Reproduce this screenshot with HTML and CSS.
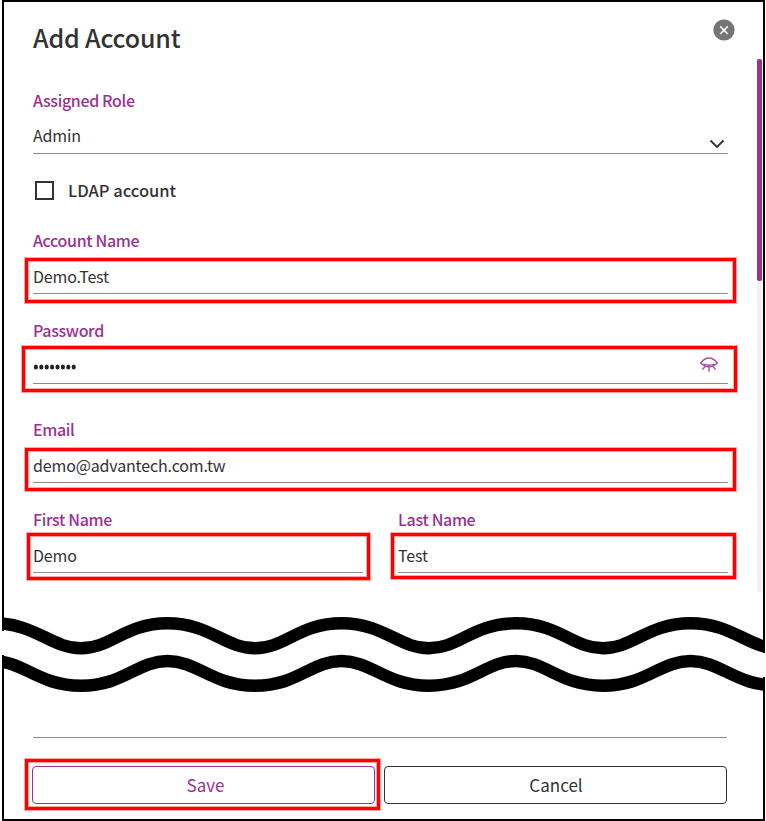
FILE: index.html
```html
<!DOCTYPE html>
<html lang="en">
    <head>
        <title>Add Account</title>
        <meta charset="UTF-8">
        <meta name="viewport" content="width=device-width, initial-scale=1.0">
        <link rel="stylesheet" href="styles.css">
    </head>
    <body>
        <div class="dialog">
            <div class="header">
                <h1 class="title">Add Account</h1>
                <svg class="close" width="22" height="22" viewBox="0 0 22 22">
                    <circle cx="11" cy="11" r="10.6" fill="#757575"/>
                    <path d="M7.2 7.4 L14.8 15 M14.8 7.4 L7.2 15" stroke="#fff" stroke-width="1.6"/>
                </svg>
            </div>
            <div class="content">
                <div class="form">
                    <div class="field select">
                        <div class="label">Assigned Role</div>
                        <div class="value">
                            <span class="role">Admin</span>
                            <svg class="chevron" width="16" height="10" viewBox="0 0 16 10">
                                <path d="M1.5 1.5 L8 8 L14.5 1.5" fill="none" stroke="#333" stroke-width="1.8"/>
                            </svg>
                        </div>
                    </div>
                    <div class="check-row">
                        <span class="checkbox"></span>
                        <span class="check-label">LDAP account</span>
                    </div>
                    <div class="field">
                        <div class="label">Account Name</div>
                        <div class="value"><span class="account">Demo.Test</span></div>
                        <div class="highlight mark-account"></div>
                    </div>
                    <div class="field password">
                        <div class="label">Password</div>
                        <div class="value">
                            <svg class="dots" width="44" height="6" viewBox="0 0 44 6" fill="#222">
                                <ellipse cx="2.9" cy="3" rx="2.1" ry="2.5"/>
                                <ellipse cx="8.3" cy="3" rx="2.1" ry="2.5"/>
                                <ellipse cx="13.7" cy="3" rx="2.1" ry="2.5"/>
                                <ellipse cx="19.1" cy="3" rx="2.1" ry="2.5"/>
                                <ellipse cx="24.5" cy="3" rx="2.1" ry="2.5"/>
                                <ellipse cx="29.9" cy="3" rx="2.1" ry="2.5"/>
                                <ellipse cx="35.3" cy="3" rx="2.1" ry="2.5"/>
                                <ellipse cx="40.7" cy="3" rx="2.1" ry="2.5"/>
                            </svg>
                            <svg class="eye" width="20" height="16" viewBox="0 0 20 16" fill="none" stroke="#a94fa5" stroke-width="1.4">
                                <path d="M1.6 7 Q5.6 2 10 2 T18.4 7 Q14.4 10.8 10 10.8 T1.6 7 Z"/>
                                <path d="M4.4 8.2 Q10 10.2 15.6 8.2"/>
                                <path d="M6.6 9.8 L3.4 13.6 M10 10 V15.8 M13.4 9.8 L16.6 13.6"/>
                            </svg>
                        </div>
                        <div class="highlight mark-password"></div>
                    </div>
                    <div class="field email">
                        <div class="label">Email</div>
                        <div class="value"><span class="address">demo@advantech.com.tw</span></div>
                        <div class="highlight mark-email"></div>
                    </div>
                    <div class="names">
                        <div class="field">
                            <div class="label">First Name</div>
                            <div class="value"><span>Demo</span></div>
                            <div class="highlight mark-first"></div>
                        </div>
                        <div class="field">
                            <div class="label">Last Name</div>
                            <div class="value"><span>Test</span></div>
                            <div class="highlight mark-last"></div>
                        </div>
                    </div>
                </div>
                <div class="scrollbar"><div class="thumb"></div></div>
            </div>

            <!-- page break, the frame is open between the two waves -->
            <svg class="wave" width="763" height="108" viewBox="2 592 763 108">
                <path d="M3 592 V631 M3 655 V700 M764 592 V653 M764 677 V700" stroke="#000" stroke-width="2"/>
                <clipPath id="cut-top"><rect x="4" y="592" width="759" height="108"/></clipPath>
                <clipPath id="cut-bottom"><rect x="2" y="592" width="761" height="108"/></clipPath>
                <g fill="none" stroke="#000" stroke-width="12.4">
                    <path clip-path="url(#cut-top)" d="M-6.5 623.3 C36 623.3 51 648.3 81 648.3 S125 623.3 167.5 623.3
                        S225 648.3 255 648.3 S299 623.3 341.5 623.3 S399 648.3 429 648.3 S473 623.3 516 623.3
                        S573 648.3 603 648.3 S648 623.3 690.5 623.3 S748 648.3 778 648.3"/>
                    <path clip-path="url(#cut-bottom)" d="M-6.5 661 C24 661 38 685.7 81 685.7 S137 661 167.5 661
                        S212 685.7 255 685.7 S311 661 341.5 661 S386 685.7 429 685.7 S486 661 516 661
                        S560 685.7 603 685.7 S660 661 690.5 661 S735 685.7 778 685.7"/>
                </g>
            </svg>

            <div class="footer">
                <div class="actions">
                    <div class="button save">Save<div class="highlight mark-save"></div></div>
                    <div class="button cancel">Cancel</div>
                </div>
            </div>
        </div>
    </body>
</html>
```
FILE: styles.css
```css
* {
    box-sizing: border-box;
}
body {
    margin: 0;
    background: #fff;
    color: #333;
    font-family: "Noto Sans CJK TC", "Noto Sans", sans-serif;
    font-size: 16px;
}
svg {
    display: block;
}
.dialog {
    display: flex;
    flex-direction: column;
    width: 763px;
    height: 821px;
    margin-left: 2px;
    border: 2px solid #000;
}
.header {
    display: flex;
    justify-content: space-between;
    height: 57px;
    padding: 17px 28px 0 29px;
}
.title {
    margin: 1px 0 0;
    font-size: 25px;
    font-weight: 500;
    letter-spacing: -0.15px;
    line-height: 34px;
}
.content {
    display: flex;
    height: 533px;
}
.form {
    flex: 1;
    padding: 31px 29px 0;
}
.scrollbar {
    width: 5px;
    margin-right: 1px;
    background: #f1f1f1;
}
.thumb {
    height: 222px;
    border-radius: 2px;
    background: #9b3192;
}
.field {
    position: relative;
    height: 64px;
    border-bottom: 1px solid #8c8c8c;
}
.label {
    color: #9b3192;
    font-weight: 500;
    letter-spacing: -0.35px;
    line-height: 20px;
}
.value {
    display: flex;
    align-items: center;
    justify-content: space-between;
    height: 32px;
    margin-top: 10px;
    letter-spacing: -0.15px;
}
.select .value {
    height: 30px;
}
.chevron {
    margin: 17px 3px 0 0;
}
.check-row {
    display: flex;
    align-items: center;
    gap: 14px;
    height: 20px;
    margin: 26px 0 30px 2px;
}
.checkbox {
    width: 19px;
    height: 19px;
    border: 2px solid #333;
}
.check-label {
    font-size: 16.5px;
    font-weight: 500;
    line-height: 20px;
}
.password {
    margin-top: 26px;
}
.dots {
    margin-top: 2px;
}
.eye {
    margin: -5px 9px 0 0;
}
.email {
    margin-top: 35px;
}
.names {
    display: grid;
    grid-template-columns: 330px 330px;
    gap: 35px;
    margin-top: 26px;
}
/* red frames drawn over the fields */
.highlight {
    position: absolute;
    border: 3px solid #f00;
    box-shadow: 0 0 0 1px rgba(255, 0, 0, 0.35), inset 0 0 0 1px rgba(255, 0, 0, 0.35);
}
.mark-account {
    inset: 28px -8px -10px;
}
.mark-password {
    inset: 26px -9px -9px -11px;
}
.mark-email {
    inset: 29px -8px -9px;
}
.mark-first {
    inset: 24px -7px -8px -6px;
}
.mark-last {
    inset: 24px -8px -7px -7px;
}
.wave {
    flex: none;
    margin: 0 -2px;
    background: #fff;
}
.footer {
    margin: 37px 36px 0 29px;
    padding-top: 28px;
    border-top: 1px solid #8c8c8c;
}
.actions {
    display: grid;
    grid-template-columns: 343px 343px;
    gap: 9px;
    margin-left: -1px;
}
.button {
    position: relative;
    height: 38px;
    border: 1px solid #333;
    border-radius: 4px;
    font-size: 17px;
    line-height: 36px;
    text-align: center;
}
.save {
    padding-left: 4px;
    border-color: #9b3192;
    color: #9b3192;
}
.cancel {
    padding-left: 1px;
}
.mark-save {
    inset: -8px -6px -7px -8px;
}
```
